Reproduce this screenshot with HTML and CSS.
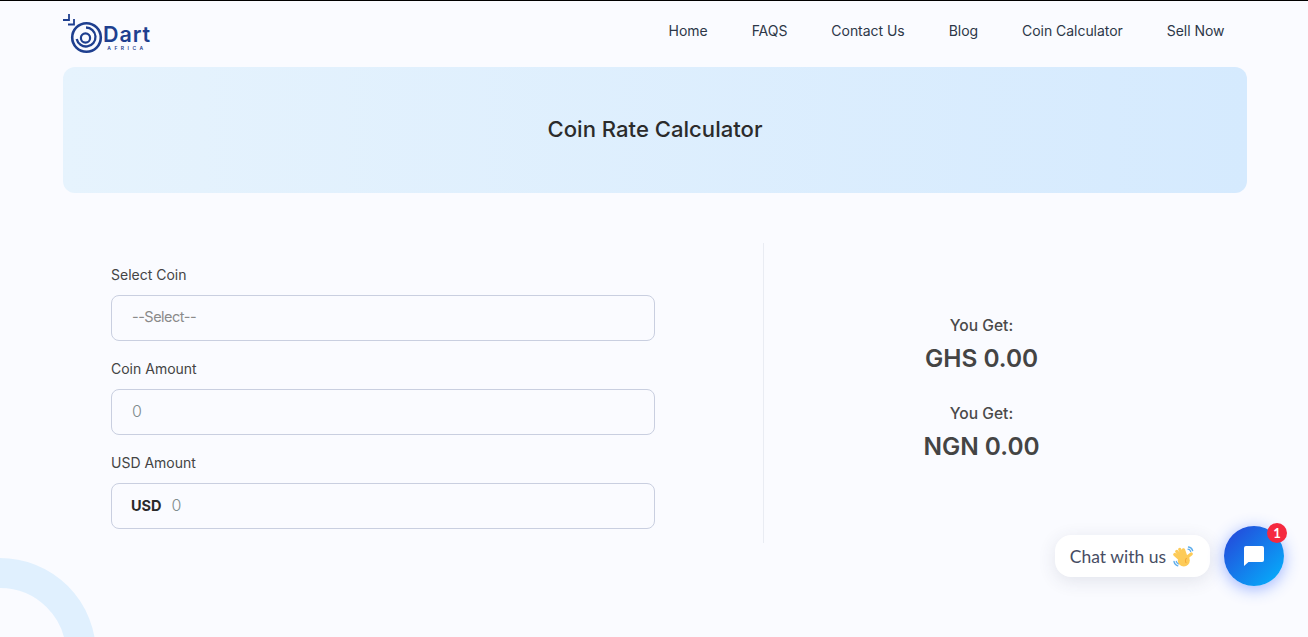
FILE: index.html
```html
<!DOCTYPE html>
<html lang="en">
<head>
<meta charset="utf-8">
<title>Coin Rate Calculator</title>
<link rel="stylesheet" href="styles.css">
</head>
<body>
<div class="shell">
  <div class="arc"></div>
  <div class="page">
    <header class="header">
      <a class="logo" href="#">
        <svg class="logo-mark" width="42" height="42" viewBox="0 0 42 42" fill="none" stroke="#1e3f8f">
          <circle cx="24.5" cy="24.5" r="14.3" stroke-width="2.6"/>
          <path d="M24 14.500a9.500 9.500 0 1 1-9.300 11.500" stroke-width="2.300"/>
          <circle cx="23.500" cy="25" r="4.600" stroke-width="2.200"/>
          <path d="M1 7h6V1" stroke-width="1.800"/>
          <path d="M6 11.500h6V6" stroke-width="1.800"/>
        </svg>
        <span class="logo-text">
          <span class="logo-name">Dart</span>
          <span class="logo-sub">AFRICA</span>
        </span>
      </a>
      <nav class="nav">
        <a href="#">Home</a>
        <a href="#">FAQS</a>
        <a href="#">Contact Us</a>
        <a href="#">Blog</a>
        <a href="#">Coin Calculator</a>
        <a href="#">Sell Now</a>
      </nav>
    </header>
    <section class="hero"><h1>Coin Rate Calculator</h1></section>
    <main class="calc">
      <form class="form">
        <div class="field">
          <label>Select Coin</label>
          <div class="box placeholder">--Select--</div>
        </div>
        <div class="field">
          <label>Coin Amount</label>
          <div class="box value">0</div>
        </div>
        <div class="field">
          <label>USD Amount</label>
          <div class="box value"><strong>USD</strong>0</div>
        </div>
      </form>
      <aside class="results">
        <div class="result"><p>You Get:</p><h2>GHS 0.00</h2></div>
        <div class="result"><p>You Get:</p><h2>NGN 0.00</h2></div>
      </aside>
    </main>
  </div>
  <div class="chat">
    <div class="chat-label">Chat with us
      <svg class="wave" width="22" height="22" viewBox="0 0 22 22" fill="none" stroke-linecap="round">
        <path d="M15.500 1c2 .3 3.600 1.700 4.200 3.700M15 3.200c1.200.2 2.200 1 2.700 2.300M1 15.500c.4 2 1.800 3.700 3.800 4.300M3.300 15.300c.3 1.200 1 2 2.200 2.600" stroke="#5dadec" stroke-width="1.300"/>
        <g stroke="#fdcb58" stroke-width="3.200">
          <path d="M8 14L1.800 8.500M9 12L3.800 5.500M11 11L6.800 3.500M13 11L10.500 3.800M14 14l1-3.500 3.200-2.500"/>
        </g>
        <circle cx="10.800" cy="14.500" r="6" fill="#fdcb58"/>
        <path d="M13.300 12.300c-1 1.300-1.200 3-.3 4.500" stroke="#f19020" stroke-width=".7"/>
      </svg>
    </div>
    <div class="chat-btn">
      <svg width="20" height="20" viewBox="0 0 20 20"><path d="M2 0h16a2 2 0 0 1 2 2v12a2 2 0 0 1-2 2H4.500L0 20V2a2 2 0 0 1 2-2z" fill="#fff"/></svg>
      <span class="badge">1</span>
    </div>
  </div>
</div>
</body>
</html>
```
FILE: styles.css
```css
* { box-sizing: border-box; }
html, body { height: 100%; }
body {
  margin: 0;
  background: #fafbff;
  font-family: Inter, "Liberation Sans", sans-serif;
  color: #333;
}
.shell {
  position: relative;
  height: 100%;
  overflow: hidden;
  border-top: 1px solid #000;
}
.arc {
  position: absolute;
  left: -96px;
  top: 557px;
  width: 192px;
  height: 192px;
  border: 30px solid #e0f0fe;
  border-radius: 50%;
}
.page {
  position: relative;
  margin: 0 61px 0 63px;
}
.header {
  display: flex;
  justify-content: space-between;
  align-items: flex-start;
  height: 66px;
}
.logo {
  display: flex;
  align-items: flex-start;
  padding-top: 12px;
  margin-left: -1px;
  text-decoration: none;
  color: #1e3f8f;
}
.logo-mark { flex: none; }
.logo-text {
  display: flex;
  flex-direction: column;
  align-items: center;
  margin: 9px 0 0 -1px;
}
.logo-name {
  font-size: 21.500px;
  font-weight: 600;
  line-height: 24px;
  letter-spacing: 0.9px;
}
.logo-sub {
  font-size: 5px;
  font-weight: 600;
  line-height: 6px;
  letter-spacing: 3.500px;
  margin-top: -1px;
}
.nav {
  display: flex;
  gap: 44px;
  padding: 21px 22.500px 0 0;
}
.nav a {
  font-size: 14px;
  line-height: 17px;
  letter-spacing: -0.04px;
  color: #2d3748;
  text-decoration: none;
}
.hero {
  display: flex;
  justify-content: center;
  align-items: center;
  height: 126px;
  padding-bottom: 3px;
  border-radius: 12px;
  background: linear-gradient(90deg, #e6f3fd, #d5eafe);
}
.hero h1 {
  margin: 0;
  font-size: 22.100px;
  font-weight: 500;
  color: #2b2b2b;
}
.calc {
  display: flex;
  margin-top: 50px;
}
.form {
  width: 701px;
  height: 300px;
  padding: 23px 108px 0 48px;
  border-right: 1px solid #e9ecf3;
  display: flex;
  flex-direction: column;
  gap: 19px;
}
.field label {
  display: block;
  font-size: 14px;
  line-height: 17px;
  color: #444;
  margin-bottom: 12px;
}
.box {
  display: flex;
  align-items: center;
  height: 46px;
  padding: 0 20px 2px;
  border: 1px solid #c9cfe0;
  border-radius: 8px;
}
.placeholder {
  padding-bottom: 4px;
  color: #8a8a8a;
  font-size: 14.500px;
  letter-spacing: -0.5px;
}
.value { color: #7f8c8d; font-size: 16px; font-weight: 300; }
.box strong {
  margin: 0 10px 0 -1px;
  font-size: 14.500px;
  font-weight: 700;
  color: #2a2a2a;
}
.results {
  flex: 1;
  padding: 73px 48px 0 0;
  display: flex;
  flex-direction: column;
  gap: 28px;
  align-items: center;
}
.result { text-align: center; width: 100%; }
.result p {
  margin: 0 0 5px;
  font-size: 15.600px;
  line-height: 20px;
  font-weight: 500;
  color: #4a4a4a;
}
.result h2 {
  margin: 0;
  font-size: 24.400px;
  line-height: 35px;
  font-weight: 600;
  color: #444;
}
.chat {
  position: absolute;
  right: 24px;
  bottom: 51px;
  display: flex;
  align-items: center;
  gap: 14px;
}
.chat-label {
  display: flex;
  align-items: center;
  gap: 7px;
  height: 42px;
  padding: 2px 15px 0 15px;
  background: #fff;
  border-radius: 16px;
  box-shadow: 0 4px 18px rgba(50, 60, 90, 0.12);
  font-family: Lato, sans-serif;
  font-size: 17.500px;
  line-height: 24px;
  color: #474d63;
}
.chat-btn {
  position: relative;
  display: flex;
  align-items: center;
  justify-content: center;
  width: 60px;
  height: 60px;
  border-radius: 50%;
  background: linear-gradient(135deg, #2741d8, #03b5fd);
  box-shadow: 0 3px 16px rgba(40, 90, 255, 0.45);
}
.badge {
  position: absolute;
  top: -3px;
  right: -3px;
  width: 20px;
  height: 20px;
  border-radius: 50%;
  background: #f5293f;
  color: #fff;
  font-family: Lato, sans-serif;
  font-size: 13px;
  font-weight: 700;
  line-height: 20px;
  text-align: center;
}
```
